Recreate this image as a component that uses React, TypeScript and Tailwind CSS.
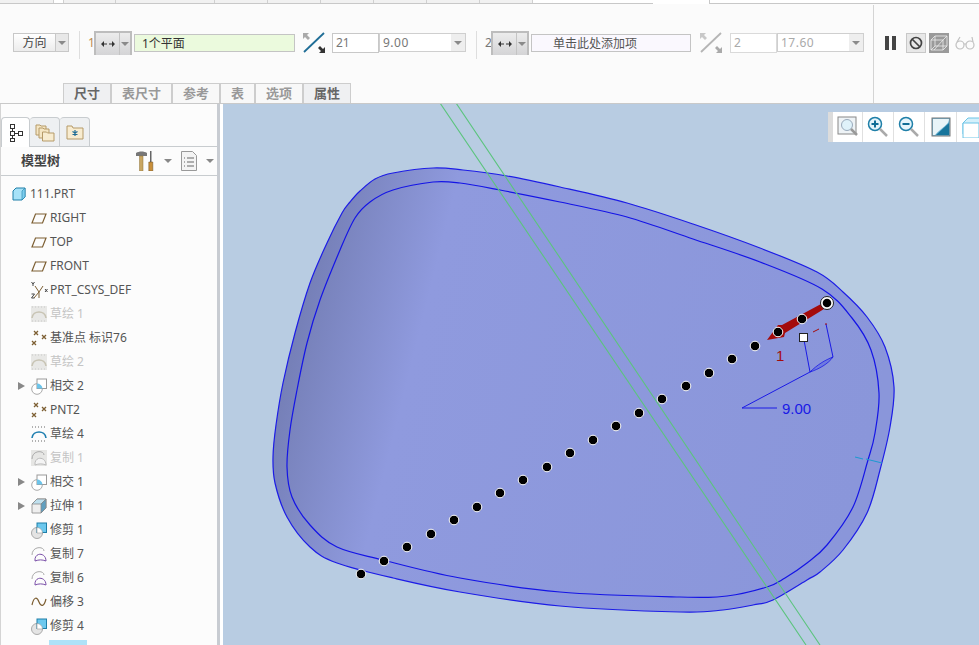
import type { ReactNode } from "react";

type Pt = [number, number];

const outer: Pt[] = [
  [433, 168], [393, 173], [375, 179], [360, 191], [350, 202], [342, 213], [327, 243], [310, 283], [295, 333], [283, 383], [276, 425], [273, 457],
  [275, 483], [287, 517], [310, 547], [337, 563], [393, 578], [460, 592], [560, 606], [680, 612], [723, 610], [753, 605], [773, 600], [807, 580], [820, 572],
  [843, 550], [867, 513], [880, 470], [890, 427], [894, 387], [885, 347], [867, 317], [843, 292], [817, 272], [760, 248], [693, 224], [627, 203], [560, 187], [507, 176], [463, 170],
];

const inner: Pt[] = [
  [433, 182], [393, 190], [370, 202], [355, 218], [340, 250], [320, 300], [307, 343], [297, 390], [290, 430], [287, 467],
  [292, 497], [310, 525], [337, 547], [383, 560], [460, 578], [560, 592], [680, 597], [727, 596], [767, 587], [785, 578], [807, 563],
  [827, 545], [853, 507], [868, 460], [875, 433], [879, 393], [871, 350], [852, 318], [822, 289], [760, 262], [693, 239], [627, 217], [560, 202], [500, 190], [460, 183],
];

const dots: Pt[] = [
  [361, 574], [384, 561], [407, 547], [431, 534], [454, 520], [477, 507], [500, 493], [523, 480], [547, 467], [570, 453],
  [593, 440], [616, 426], [639, 413], [662, 399], [686, 386], [709, 373], [732, 359], [755, 346], [778, 332], [802, 319],
];

// closed catmull-rom through the traced points
function smooth(p: Pt[]) {
  let d = `M${p[0][0]} ${p[0][1]}`;
  for (let i = 0; i < p.length; i++) {
    const a = p[(i - 1 + p.length) % p.length];
    const b = p[i];
    const c = p[(i + 1) % p.length];
    const e = p[(i + 2) % p.length];
    const c1x = b[0] + (c[0] - a[0]) / 6;
    const c1y = b[1] + (c[1] - a[1]) / 6;
    const c2x = c[0] - (e[0] - b[0]) / 6;
    const c2y = c[1] - (e[1] - b[1]) / 6;
    d += ` C${c1x.toFixed(1)} ${c1y.toFixed(1)} ${c2x.toFixed(1)} ${c2y.toFixed(1)} ${c[0]} ${c[1]}`;
  }
  return d + "Z";
}

function Tri({ className }: { className?: string }) {
  return <span className={`block w-0 h-0 border-x-[4px] border-x-transparent border-t-[4px] ${className ?? "border-t-[#8a8a8a]"}`} />;
}

function ArrowsIcon() {
  return (
    <svg width="14" height="8" viewBox="0 0 14 8">
      <path d="M0 4l3-3v6zM14 4l-3-3v6z" fill="#333" />
      <path d="M3 4h3M8 4h3" stroke="#333" />
    </svg>
  );
}

function FlipIcon({ muted }: { muted?: boolean }) {
  const line = muted ? "#b5b5b5" : "#1f6d96";
  const a = muted ? "#c8c8c8" : "#aaa";
  const b = muted ? "#aaa" : "#333";
  return (
    <svg width="24" height="22" viewBox="0 0 24 22">
      <path d="M1 1h6l-2 2 3 3-2 2-3-3-2 2z" fill={a} />
      <path d="M23 21h-6l2-2-3-3 2-2 3 3 2-2z" fill={b} />
      <path d="M2 20L22 1" stroke={line} strokeWidth="1.800" />
    </svg>
  );
}

function SplitButton() {
  return (
    <div className="flex h-6 w-[38px] border-2 border-[#bdbdbd] border-b-0 bg-gradient-to-b from-[#ececec] to-[#d4d4d6]">
      <div className="flex w-[23px] items-center justify-center"><ArrowsIcon /></div>
      <div className="flex flex-1 items-center justify-center border-l border-[#c4c4c4]"><Tri /></div>
    </div>
  );
}

function Combo({ value, muted }: { value: string; muted?: boolean }) {
  return (
    <div className="flex h-[19px] w-[87px] border border-[#cfcfcf] bg-white">
      <span className={`flex-1 pl-[3px] text-[12px] leading-[17px] tracking-[0.5px] ${muted ? "text-[#aaa]" : "text-[#777]"}`}>{value}</span>
      <div className="flex w-[14px] items-center justify-center bg-[#eeeeee]"><Tri /></div>
    </div>
  );
}

function Ribbon() {
  const tabs = [
    { t: "尺寸", w: "w-[48px]", on: true },
    { t: "表尺寸", w: "w-[61px]" },
    { t: "参考", w: "w-[48px]" },
    { t: "表", w: "w-[35px]" },
    { t: "选项", w: "w-[48px]" },
    { t: "属性", w: "w-[48px]", on: true },
  ];
  return (
    <div className="relative flex h-[104px] flex-col border-b border-[#c9c9c9] bg-[#fbfbfb]">
      {/* what is left of the tab strip above */}
      <div className="flex h-1 text-[0]">
        <div className="flex w-[653px] border-b border-[#c8c8c8] bg-[#f1f1f1]">
          <div className="w-[54px] border-r border-[#d0d0d0]" />
          <div className="w-[9px] bg-white" />
          <div className="w-[53px] border-x border-[#d0d0d0]" />
          <div className="w-[99px] border-r border-[#d0d0d0]" />
          <div className="w-[53px] border-r border-[#d0d0d0]" />
          <div className="w-[53px] border-r border-[#d0d0d0]" />
          <div className="w-[53px] border-r border-[#d0d0d0]" />
          <div className="w-[53px] border-r border-[#d0d0d0]" />
          <div className="w-[53px] border-r border-[#d0d0d0]" />
          <div className="w-[53px] border-r border-[#d0d0d0]" />
          <div className="flex-1 bg-white" />
        </div>
        <div className="w-[56px] bg-white" />
        <div className="flex-1 border-b border-l border-[#c8c8c8] bg-white" />
      </div>

      <div className="flex flex-1 items-start pl-[13px] pt-[27px]">
        <div className="mt-[2px] flex h-[19px] w-[56px] border border-[#c8c8c8]">
          <span className="w-[41px] bg-gradient-to-b from-white to-[#ececec] text-center text-[12px] leading-[17px] text-[#444]">方向</span>
          <div className="flex flex-1 items-center justify-center border-l border-[#c8c8c8] bg-[#e8e8e8]"><Tri /></div>
        </div>
        <div className="ml-[10px] h-7 w-px bg-[#dedede]" />
        <span className="ml-[8px] mt-[4px] w-[6px] text-[12px] leading-4 text-[#b98b52]">1</span>
        <SplitButton />
        <div className="ml-[2px] mt-[3px] h-[18px] w-[161px] border border-[#c4c4c4] bg-[#ebfadd] pl-[7px] text-[12px] leading-[17px] text-[#333]">1个平面</div>
        <div className="ml-[7px] mt-[1px]"><FlipIcon /></div>
        <div className="ml-[6px] mt-[2px] h-5 w-[47px] border border-[#c8c8c8] bg-white pl-[3px] text-[12px] leading-[17px] text-[#777]">21</div>
        <div className="mt-[2px]"><Combo value="9.00" /></div>
        <div className="ml-[10px] h-7 w-px bg-[#dedede]" />
        <span className="ml-[8px] mt-[4px] w-[6px] text-[12px] leading-4 text-[#777]">2</span>
        <SplitButton />
        <div className="ml-[2px] mt-[3px] h-[18px] w-[160px] border border-[#c4c4c4] bg-[#faf8fe] pl-[21px] text-[12px] leading-[17px] text-[#555]">单击此处添加项</div>
        <div className="ml-[8px] mt-[1px]"><FlipIcon muted /></div>
        <div className="ml-[7px] mt-[2px] h-5 w-[47px] border border-[#dadada] bg-white pl-[3px] text-[12px] leading-[17px] text-[#aaa]">2</div>
        <div className="mt-[2px]"><Combo value="17.60" muted /></div>
      </div>

      {/* pause / no-go / hidden-line / glasses group */}
      <div className="absolute bottom-0 left-[873px] right-0 top-[5px] flex items-start border-l border-[#d4d4d4] pl-[10px] pt-[28px]">
        <svg className="mt-[3px]" width="13" height="14" viewBox="0 0 13 14"><path d="M1 0h4v14H1zM8 0h4v14H8z" fill="#444" /></svg>
        <div className="ml-[9px] flex h-5 w-5 items-center justify-center border border-[#c8c8c8] bg-[#e8e8e8]">
          <svg width="14" height="14" viewBox="0 0 14 14" fill="none" stroke="#444" strokeWidth="1.7"><circle cx="7" cy="7" r="5.5" /><path d="M3 3l8 8" /></svg>
        </div>
        <div className="ml-[3px] flex h-5 w-5 items-center justify-center bg-[#9a9a9a]">
          <svg width="18" height="16" viewBox="0 0 18 16" fill="none" stroke="#eee" strokeWidth="0.8"><path d="M1 5l4-4h12v10l-4 4H1zM1 5h12v10M13 5l4-4M5 1v10h12M5 11l-4 4M4 15l9-10" /></svg>
        </div>
        <svg className="ml-[6px] mt-[3px]" width="20" height="14" viewBox="0 0 20 14" fill="none" stroke="#c0c0c0" strokeWidth="1.2"><circle cx="5" cy="9" r="4" /><circle cx="15" cy="9" r="4" /><path d="M9 8h2M2 6l3-5M18 6l-1-5" /></svg>
      </div>

      <div className="flex pl-[63px]">
        {tabs.map((tab) => (
          <div key={tab.t} className={`${tab.w} h-5 border border-b-0 border-[#cdcdcd] text-center text-[13px] font-bold leading-[19px] ${tab.on ? "bg-[#eff0f2] text-[#666]" : "bg-[#f8f8f8] text-[#999]"}`}>
            {tab.t}
          </div>
        ))}
      </div>
    </div>
  );
}

const brown = "#7d5f33";

function PlaneIcon() {
  return <svg width="16" height="11" viewBox="0 0 16 11" fill="none" stroke={brown} strokeWidth="1.2"><path d="M4.5 1H15l-3.5 9H1z" /></svg>;
}
function CsysIcon() {
  return (
    <svg width="17" height="18" viewBox="0 0 17 18" fill="none" stroke={brown} strokeWidth="1">
      <path d="M4 5l4 6 4-6M8 11v6M3 17l5-6" />
      <path d="M14 8l2.500 3M16.500 8l-2.500 3" stroke="#444" />
      <path d="M0.500 1l1.500 2 1.500-2M2 3v2M0.500 13h3l-3 4h3" stroke="#444" />
    </svg>
  );
}
function PointsIcon() {
  return (
    <svg width="16" height="16" viewBox="0 0 16 16" fill="none" stroke={brown} strokeWidth="1.3">
      <path d="M3 1l4 4M7 1l-4 4M11 5l4 4M15 5l-4 4M1 11l4 4M5 11l-4 4" />
    </svg>
  );
}
function SketchIcon({ off }: { off?: boolean }) {
  return (
    <svg width="16" height="16" viewBox="0 0 16 16" fill="none">
      {off && <rect width="16" height="16" fill="#e8e8e6" />}
      <path d="M1 12c1-8 13-8 14 0" stroke={off ? "#c8c4b4" : "#1f7fb0"} strokeWidth="1.6" />
      <path d="M1 1h14M1 15h14" stroke={off ? "#c8c8c8" : "#666"} strokeDasharray="1 2" />
    </svg>
  );
}
function IntersectIcon() {
  return (
    <svg width="16" height="17" viewBox="0 0 16 17" fill="none">
      <circle cx="6" cy="11" r="5.300" stroke="#aaa" fill="#fff" />
      <rect x="6" y="1" width="9.500" height="9.500" fill="#fff" stroke="#999" />
      <path d="M6 5.500A5.500 5.500 0 0 1 11.500 10.500H6z" fill="#6cc4ea" />
    </svg>
  );
}
function CopyIcon({ off }: { off?: boolean }) {
  return (
    <svg width="16" height="16" viewBox="0 0 16 16" fill="none">
      {off && <rect width="16" height="16" fill="#e6e6e4" />}
      <path d="M1 9c0-9 12-9 12-4" stroke="#aaa" />
      <path d="M4 15c-1-9 11-9 11 0-4-1.500-7-1.500-11 0z" stroke={off ? "#bbb" : "#7a4fa8"} fill={off ? "#f4f4f4" : "none"} />
    </svg>
  );
}
function ExtrudeIcon() {
  return (
    <svg width="16" height="16" viewBox="0 0 16 16" stroke="#888" strokeWidth="0.8">
      <path d="M1 6l5-5h9v9l-5 5H1z" fill="#eee" />
      <path d="M1 6l5-5h9l-5 5z" fill="#bfe0ee" />
      <path d="M10 6l5-5v9l-5 5z" fill="#5f9fc0" />
    </svg>
  );
}
function TrimIcon() {
  return (
    <svg width="16" height="17" viewBox="0 0 16 17">
      <circle cx="6" cy="11" r="5.500" fill="#e4e4e4" stroke="#aaa" />
      <rect x="6" y="1" width="9.500" height="9.500" fill="#6cc8ee" stroke="#1f7fa8" />
      <path d="M6 5.500V11h5.500A5.500 5.500 0 0 0 6 5.500z" fill="#fff" stroke="#999" strokeWidth="0.6" />
    </svg>
  );
}
function OffsetIcon() {
  return <svg width="16" height="10" viewBox="0 0 16 10" fill="none" stroke={brown} strokeWidth="1.200"><path d="M1 8C3-1 6 0 8 5s5 5 7-3" /></svg>;
}
function PartIcon() {
  return (
    <svg width="14" height="14" viewBox="0 0 14 14" stroke="#1f7fa8">
      <path d="M1 4l3-3h9v9l-3 3H1z" fill="#a6e2f8" />
      <path d="M10 4l3-3v9l-3 3z" fill="#7dcdee" strokeWidth="0.6" />
    </svg>
  );
}

const rows: { icon: ReactNode; text: string; off?: boolean; arrow?: boolean }[] = [
  { icon: <PlaneIcon />, text: "RIGHT" },
  { icon: <PlaneIcon />, text: "TOP" },
  { icon: <PlaneIcon />, text: "FRONT" },
  { icon: <CsysIcon />, text: "PRT_CSYS_DEF" },
  { icon: <SketchIcon off />, text: "草绘 1", off: true },
  { icon: <PointsIcon />, text: "基准点 标识76" },
  { icon: <SketchIcon off />, text: "草绘 2", off: true },
  { icon: <IntersectIcon />, text: "相交 2", arrow: true },
  { icon: <PointsIcon />, text: "PNT2" },
  { icon: <SketchIcon />, text: "草绘 4" },
  { icon: <CopyIcon off />, text: "复制 1", off: true },
  { icon: <IntersectIcon />, text: "相交 1", arrow: true },
  { icon: <ExtrudeIcon />, text: "拉伸 1", arrow: true },
  { icon: <TrimIcon />, text: "修剪 1" },
  { icon: <CopyIcon />, text: "复制 7" },
  { icon: <CopyIcon />, text: "复制 6" },
  { icon: <OffsetIcon />, text: "偏移 3" },
  { icon: <TrimIcon />, text: "修剪 4" },
];

function TreeIcon() {
  return (
    <svg width="16" height="18" viewBox="0 0 16 18" fill="none" stroke="#333">
      <rect x="2.500" y="0.500" width="4" height="4" />
      <rect x="2.500" y="7.500" width="4" height="4" />
      <rect x="2.500" y="14.500" width="4" height="3" />
      <rect x="10.500" y="7.500" width="4" height="4" />
      <path d="M4.500 4.500v3M4.500 11.500v3M6.500 9.500h4" />
    </svg>
  );
}
function FoldersIcon() {
  return (
    <svg width="20" height="20" viewBox="0 0 20 20" stroke="#b59a68" fill="#f5e6c4">
      <path d="M1 3h4l1 1h5v9H1z" />
      <path d="M4 6h4l1 1h5v9H4z" />
      <path d="M7.500 10h4l1 1h6.500v8H7.500z" fill="#f8ecd0" />
    </svg>
  );
}
function StarFolderIcon() {
  return (
    <svg width="18" height="16" viewBox="0 0 18 16">
      <path d="M1 2h5l1 2h10v11H1z" fill="#f8ecd0" stroke="#b59a68" />
      <path d="M9 6v6M6.500 7.500l5 3M11.500 7.500l-5 3" stroke="#1f6d96" strokeWidth="1.200" />
    </svg>
  );
}
function ToolsIcon() {
  return (
    <svg width="19" height="20" viewBox="0 0 19 20">
      <path d="M0 2c3-2 8-2 11 0v3H0z" fill="#777" />
      <path d="M3.500 5h3.500v15H3.500z" fill="#c9a662" stroke="#8f7238" strokeWidth="0.5" />
      <path d="M14 0h1.500v11H14z" fill="#666" />
      <path d="M12.800 11h4v9h-4z" fill="#c98f3a" stroke="#6b4f20" strokeWidth="0.5" />
    </svg>
  );
}
function DocIcon() {
  return (
    <svg width="16" height="20" viewBox="0 0 16 20" fill="none" stroke="#999">
      <path d="M0.500 0.500h11l4 4v15H0.500z" fill="#f4f4f4" />
      <path d="M6 7h7M6 11h7M6 15h7" stroke="#666" />
      <path d="M3 7h1M3 11h1M3 15h1" stroke="#666" />
    </svg>
  );
}

function Sidebar() {
  return (
    <div className="flex h-full w-[223px] shrink-0 bg-white">
      <div className="flex h-full w-[217px] flex-col border-l border-[#d4d4d4] bg-[#fcfcfc]">
        <div className="flex h-[43px] items-end pl-0 pt-[13px]">
          <div className="flex h-[30px] w-[29px] items-center justify-center rounded-t-sm border border-b-0 border-[#c8cccf] bg-white"><TreeIcon /></div>
          <div className="flex h-[30px] w-[30px] items-center justify-center rounded-t-sm border border-l-0 border-[#c8cccf] bg-[#eef0f2]"><FoldersIcon /></div>
          <div className="flex h-[30px] w-[30px] items-center justify-center rounded-t-sm border border-l-0 border-[#c8cccf] bg-[#eef0f2]"><StarFolderIcon /></div>
          <div className="flex-1 border-b border-[#c8cccf]" />
        </div>
        <div className="flex h-[29px] items-center border-b border-[#c8cccf]">
          <span className="ml-5 w-[115px] text-[13px] font-bold text-[#444]">模型树</span>
          <ToolsIcon />
          <Tri className="ml-[9px] border-t-[#888]" />
          <span className="ml-[9px]"><DocIcon /></span>
          <Tri className="ml-[9px] border-t-[#888]" />
        </div>
        <div className="flex-1 overflow-hidden pt-[6px] text-[12px] text-[#555]">
          <div className="flex h-6 items-center pl-[11px]">
            <PartIcon />
            <span className="ml-[4px]">111.PRT</span>
          </div>
          {rows.map((r, i) => (
            <div key={i} className="flex h-6 items-center">
              <div className="flex w-[30px] shrink-0 items-center justify-center pl-[10px]">
                {r.arrow && <span className="block h-0 w-0 border-y-[4px] border-l-[7px] border-y-transparent border-l-[#888]" />}
              </div>
              <div className="flex w-[19px] shrink-0 items-center">{r.icon}</div>
              <span className={r.off ? "text-[#c4c4c4]" : ""}>{r.text}</span>
            </div>
          ))}
          <div className="ml-[48px] mt-[2px] h-2 w-[38px] bg-[#aee2f8]" />
        </div>
      </div>
      <div className="w-[3px] bg-[#c8ccd2]" />
      <div className="w-[3px] bg-white" />
    </div>
  );
}

function ViewToolbar() {
  return (
    <div className="absolute left-[605px] top-[8px] flex h-[30px] w-[151px] overflow-hidden bg-white">
      <div className="w-[5px] shrink-0 bg-[#dcdcdc]" />
      <div className="flex w-[30px] shrink-0 items-center justify-center border-r border-[#e0e0e0]">
        <svg width="22" height="22" viewBox="0 0 22 22" fill="none">
          <rect x="1" y="1" width="18" height="17" fill="#eef3f6" stroke="#888" />
          <circle cx="10" cy="9" r="5.500" fill="#dff2fa" stroke="#9ab" />
          <path d="M14 13l6 6" stroke="#999" strokeWidth="2.500" />
        </svg>
      </div>
      <div className="flex w-[31px] shrink-0 items-center justify-center border-r border-[#e0e0e0]">
        <svg width="22" height="22" viewBox="0 0 22 22" fill="none">
          <circle cx="8" cy="8" r="6.500" fill="#e4f4fb" stroke="#1f7fa8" strokeWidth="1.500" />
          <path d="M4.500 8h7M8 4.500v7" stroke="#0f6d96" strokeWidth="2" />
          <path d="M13 13l7 7" stroke="#aaa" strokeWidth="2.500" />
        </svg>
      </div>
      <div className="flex w-[31px] shrink-0 items-center justify-center border-r border-[#e0e0e0]">
        <svg width="22" height="22" viewBox="0 0 22 22" fill="none">
          <circle cx="8" cy="8" r="6.500" fill="#e4f4fb" stroke="#1f7fa8" strokeWidth="1.500" />
          <path d="M4.500 8h7" stroke="#0f6d96" strokeWidth="2" />
          <path d="M13 13l7 7" stroke="#aaa" strokeWidth="2.500" />
        </svg>
      </div>
      <div className="flex w-[32px] shrink-0 items-center justify-center border-r border-[#e0e0e0]">
        <svg width="20" height="20" viewBox="0 0 20 20">
          <rect x="1" y="1" width="18" height="18" fill="#6fb4d4" stroke="#777" />
          <path d="M2 2h16c0 6-7 8-14 16H2z" fill="#e8f4f8" />
          <path d="M5 18L18 6v12z" fill="#17759c" />
        </svg>
      </div>
      <div className="w-[22px] shrink-0 pl-[5px] pt-[5px]">
        <svg width="22" height="21" viewBox="0 0 22 21" fill="#fff" stroke="#6cc4e6">
          <path d="M1 6l5-5h16v16H1z" fill="#d4f0fb" />
          <path d="M1 6h16v15H1z" />
        </svg>
      </div>
    </div>
  );
}

function Canvas() {
  return (
    <div className="relative h-full flex-1 overflow-hidden bg-[#b8cce2]">
      <svg className="block h-full w-full" viewBox="223 104 756 541" fill="none">
        <defs>
          <linearGradient id="body" gradientUnits="userSpaceOnUse" x1="359" y1="90" x2="922" y2="231">
            <stop offset="0" stopColor="#7680b8" />
            <stop offset="0.203" stopColor="#8f9ade" />
            <stop offset="1" stopColor="#8a96da" />
          </linearGradient>
        </defs>
        <path d={smooth(outer)} fill="url(#body)" stroke="#1c1ce6" strokeWidth="1.200" />
        <path d={smooth(inner)} stroke="#1414e6" strokeWidth="1.200" />

        <path d="M440 103L806 645M456 103L820 645" stroke="#5cc47e" strokeWidth="1.100" />
        <path d="M855 457l8 2M866 459l16 4" stroke="#1a9ad0" strokeWidth="1" />

        {/* dimension handle */}
        <path d="M804 340l6 32M826 324l7 33M810 372l23-15M742 408l68-36M742 408h35" stroke="#1a1ae6" strokeWidth="1" />
        <path d="M810 372c7-7 15-12 23-15-5 7-14 12-23 15z" stroke="#1a1ae6" strokeWidth="0.800" fill="#6f7be0" />
        <text x="782" y="414" fill="#1a1ae6" fontSize="15" fontFamily="Liberation Sans, sans-serif">9.00</text>
        <rect x="799.500" y="333.500" width="8" height="8" fill="#fff" stroke="#222" />

        {/* direction arrow */}
        <path d="M821 304L782 325L778 325L767 340L784 337L785 333L824 309Z" fill="#a40b0b" />
        <path d="M813 332l6-3M825 324h2" stroke="#a40b0b" />
        <text x="776" y="361" fill="#a40b0b" fontSize="15" fontFamily="Liberation Sans, sans-serif">1</text>

        {dots.map(([x, y], i) => (
          <circle key={i} cx={x} cy={y} r="4.800" fill="#000" stroke="#fff" strokeWidth="1" />
        ))}
        <circle cx="827" cy="303" r="6.500" fill="#fff" stroke="#222" />
        <circle cx="827" cy="303" r="4.300" fill="#000" />
      </svg>
      <ViewToolbar />
    </div>
  );
}

export default function App() {
  return (
    <div className="flex h-[645px] w-[979px] flex-col overflow-hidden bg-white font-['Noto_Sans','Noto_Sans_CJK_SC',sans-serif]">
      <Ribbon />
      <div className="flex min-h-0 flex-1">
        <Sidebar />
        <Canvas />
      </div>
    </div>
  );
}
